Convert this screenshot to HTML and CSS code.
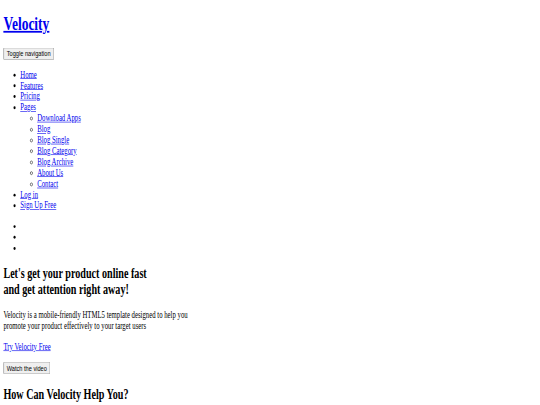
FILE: index.html
```html
<!DOCTYPE html>
<html lang="en">
<head>
<meta charset="utf-8">
<title>Velocity</title>
<link rel="stylesheet" href="styles.css">
</head>
<body class="page">
<div class="viewport">
<header class="site-header">
  <h1 class="brand"><a class="link" href="#">Velocity</a></h1>
  <nav class="nav">
    <button class="btn" type="button">Toggle navigation</button>
    <ul class="menu">
      <li><a class="link" href="#">Home</a></li>
      <li><a class="link" href="#">Features</a></li>
      <li><a class="link" href="#">Pricing</a></li>
      <li><a class="link" href="#">Pages</a>
        <ul class="submenu">
          <li><a class="link" href="#">Download Apps</a></li>
          <li><a class="link" href="#">Blog</a></li>
          <li><a class="link" href="#">Blog Single</a></li>
          <li><a class="link" href="#">Blog Category</a></li>
          <li><a class="link" href="#">Blog Archive</a></li>
          <li><a class="link" href="#">About Us</a></li>
          <li><a class="link" href="#">Contact</a></li>
        </ul>
      </li>
      <li><a class="link" href="#">Log in</a></li>
      <li><a class="link" href="#">Sign Up Free</a></li>
    </ul>
  </nav>
</header>
<section class="hero">
  <ul class="menu dots">
    <li>&nbsp;</li>
    <li>&nbsp;</li>
    <li>&nbsp;</li>
  </ul>
  <h2 class="title">Let's get your product online fast<br>and get attention right away!</h2>
  <p class="text">Velocity is a mobile-friendly HTML5 template designed to help you<br>promote your product effectively to your target users</p>
  <p class="text"><a class="link" href="#">Try Velocity Free</a></p>
  <p class="text"><button class="btn" type="button">Watch the video</button></p>
  <h2 class="title">How Can Velocity Help You?</h2>
</section>
</div>
</body>
</html>
```

FILE: styles.css
```css
html {
  background: #ffffff;
  overflow: hidden;
}

.page {
  margin: 0;
  overflow: hidden;
  height: 405px;
}

.viewport {
  display: flow-root;
  width: 1264px;
  padding: 0 8px;
  font-family: "Liberation Serif", "Times New Roman", serif;
  font-size: 16px;
  line-height: 1.15;
  color: #000000;
  transform: scale(0.4219, 0.594);
  transform-origin: 0 0;
}

.link {
  color: #0000ee;
  text-decoration: underline;
}

.brand {
  font-size: 32px;
  font-weight: bold;
  margin: 0.67em 0;
}

.btn {
  font-family: "Liberation Sans", Arial, sans-serif;
  font-size: 13.333px;
  line-height: normal;
  margin: 0;
}

.menu {
  list-style: disc;
  margin: 1em 0;
  padding-left: 40px;
}

.submenu {
  list-style: circle;
  margin: 0;
  padding-left: 40px;
}

.title {
  font-size: 24px;
  font-weight: bold;
  margin: 0.83em 0;
}

.text {
  margin: 1em 0;
}
```
